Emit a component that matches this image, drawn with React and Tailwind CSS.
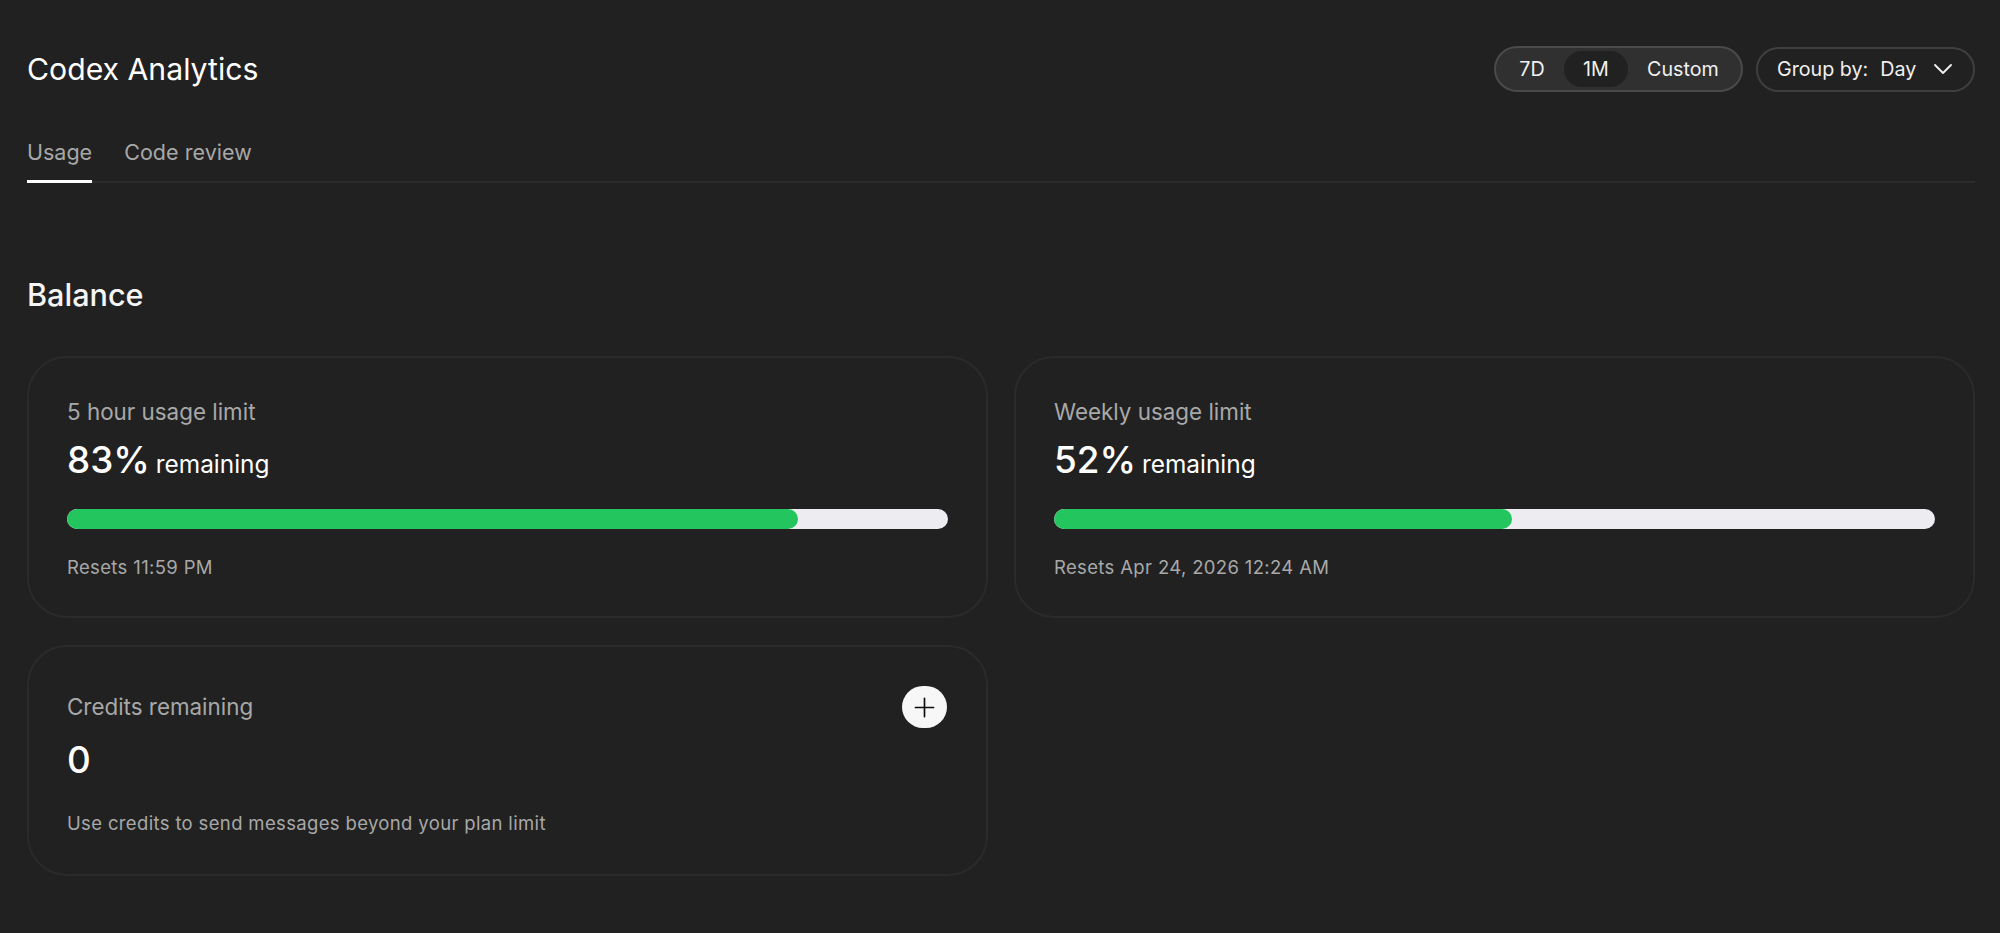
import React from 'react';
import { ChevronDown, Plus } from 'lucide-react';

const Bar = ({ value }) => (
  <div className="mt-[21px] h-[20px] w-full rounded-full bg-[#ececf1] overflow-hidden">
    <div className="h-full rounded-full bg-[#22c55e]" style={{ width: `${value}%` }} />
  </div>
);

const LimitCard = ({ title, value, resets }) => (
  <div className="h-[262px] rounded-[40px] border-2 border-[#2a2b2b] px-[38px] pt-[40px]">
    <div className="text-[22.4px] leading-[28px] text-[#a8a8a8]">{title}</div>
    <div className="mt-[10px] flex items-baseline gap-[6px] leading-[48px] text-white">
      <span className="text-[36.8px] font-[550]">{value}%</span>
      <span className="text-[24.4px]">remaining</span>
    </div>
    <Bar value={value} />
    <div className="mt-[25px] text-[18.5px] leading-[26px] tracking-[0.35px] text-[#a8a8a8]">{resets}</div>
  </div>
);

const CreditsCard = () => (
  <div className="h-[231px] rounded-[40px] border-2 border-[#2a2b2b] px-[38px] pt-[39px]">
    <div className="flex items-center justify-between">
      <div className="text-[22.4px] leading-[28px] text-[#a8a8a8]">Credits remaining</div>
      <button className="mr-[1px] flex h-[42px] w-[45px] items-center justify-center rounded-full bg-[#f7f7f8] text-[#0d0d0d]">
        <Plus className="h-[31px] w-[31px]" strokeWidth={1.3} />
      </button>
    </div>
    <div className="mt-[8px] text-[36.8px] font-[550] leading-[48px] text-white">0</div>
    <div className="mt-[26px] text-[18.5px] leading-[26px] tracking-[0.35px] text-[#a8a8a8]">
      Use credits to send messages beyond your plan limit
    </div>
  </div>
);

export default function App() {
  return (
    <div className="min-h-[933px] bg-[#212121] pl-[27px] pr-[25px] pt-[46px] font-['Inter',sans-serif]">
      <header className="flex items-center justify-between">
        <h1 className="text-[30.2px] font-normal leading-[46px] text-white">Codex Analytics</h1>
        <div className="flex items-center gap-[13px] text-[19.7px] text-[#f0f0f0]">
          <div className="flex h-[46px] w-[249px] items-center rounded-full border-2 border-[#4a4a4a] bg-[#303030] px-[3px]">
            <span className="ml-[20px] mt-[2px] w-[26px] text-center">7D</span>
            <span className="ml-[19px] flex h-[36px] w-[64px] items-center justify-center rounded-full bg-[#212121] pt-[2px]">1M</span>
            <span className="ml-[19px] mt-[2px]">Custom</span>
          </div>
          <div className="flex h-[45px] w-[219px] items-center rounded-full border-2 border-[#3f3f3f] pl-[19px]">
            <span className="mt-[2px]">Group by:</span>
            <span className="ml-[12px] mt-[2px]">Day</span>
            <ChevronDown className="ml-[11px] h-[32px] w-[32px]" strokeWidth={1.4} />
          </div>
        </div>
      </header>

      <nav className="mt-[45px] flex gap-[32px] border-b-2 border-[#2c2c2c] text-[21.5px] leading-[30px] text-[#a8a8a8]">
        <div className="-mb-[2px] border-b-[3px] border-white pb-[13px]">Usage</div>
        <div className="pb-[13px] tracking-[0.05px]">Code review</div>
      </nav>

      <h2 className="mt-[92px] text-[30.6px] font-[550] leading-[40px] text-[#f5f5f5]">Balance</h2>

      <div className="mt-[41px] grid grid-cols-2 gap-x-[26px] gap-y-[27px]">
        <LimitCard title="5 hour usage limit" value={83} resets="Resets 11:59 PM" />
        <LimitCard title="Weekly usage limit" value={52} resets="Resets Apr 24, 2026 12:24 AM" />
        <CreditsCard />
      </div>
    </div>
  );
}
